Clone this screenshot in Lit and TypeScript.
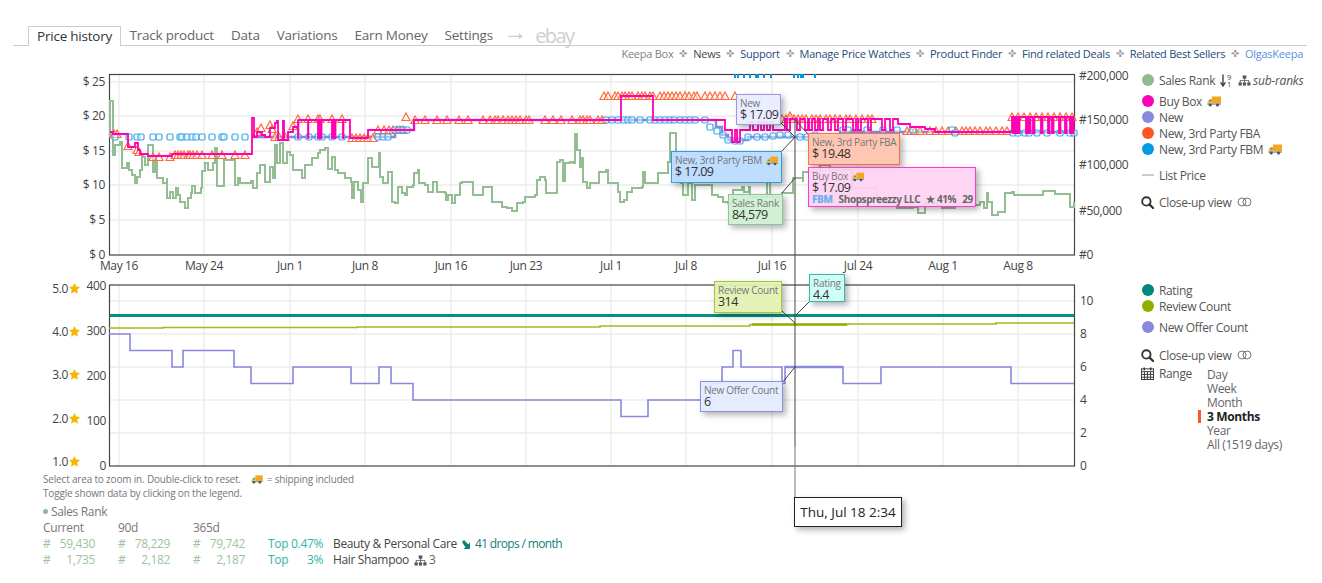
import { LitElement, css, html, svg } from 'lit';
import { customElement } from 'lit/decorators.js';

type Pt = [number, number];

const stepPath = (pts: Pt[]) =>
  pts.map(([x, y], i) => (i === 0 ? `M${x} ${y}` : `H${x} V${y}`)).join(' ');

// narrow price drops: leave the high level at x, come back width later
const pulses = (xs: number[], hi: number, lo: number, w = 1.5): Pt[] =>
  xs.flatMap((x): Pt[] => [[x, lo], [x + w, hi]]);

const row = (y: number, xs: number[]): Pt[] => xs.map((x): Pt => [x, y]);

const GRID_X = [119, 204, 290, 365, 451, 526, 611, 686, 772, 858, 943, 1018];
const DATES = ['May 16', 'May 24', 'Jun 1', 'Jun 8', 'Jun 16', 'Jun 23', 'Jul 1', 'Jul 8', 'Jul 16', 'Jul 24', 'Aug 1', 'Aug 8'];

const SALES_RANK: Pt[] = [
  [110, 138], [110, 101], [113, 101], [113, 155], [115, 145], [120, 142], [122, 168], [127, 163], [129, 170], [132, 175],
  [135, 183], [137, 177], [140, 170], [142, 157], [145, 165], [148, 145], [152, 145], [153, 172], [155, 160], [157, 178],
  [161, 178], [163, 183], [167, 178], [167, 198], [170, 192], [173, 198], [176, 188], [178, 195], [180, 202], [185, 208],
  [188, 198], [191, 193], [192, 186], [195, 193], [201, 188], [202, 171], [205, 163], [208, 170], [213, 163], [215, 148],
  [217, 186], [223, 186], [224, 160], [234, 160], [235, 185], [238, 178], [240, 183], [251, 181], [253, 188], [257, 173],
  [260, 165], [263, 165], [265, 182], [270, 167], [273, 178], [275, 145], [277, 163], [280, 143], [283, 163], [287, 152],
  [290, 155], [293, 170], [302, 178], [305, 165], [312, 158], [318, 153], [320, 150], [325, 148], [328, 169], [332, 157],
  [335, 170], [338, 173], [342, 173], [345, 178], [351, 182], [352, 198], [354, 182], [358, 190], [361, 202], [363, 183],
  [368, 158], [372, 167], [379, 153], [380, 177], [383, 183], [388, 172], [392, 202], [395, 203], [398, 187], [402, 193],
  [405, 195], [407, 187], [413, 185], [414, 173], [418, 170], [419, 183], [425, 185], [428, 192], [433, 182], [437, 192],
  [445, 193], [446, 200], [448, 195], [452, 203], [455, 195], [460, 183], [462, 182], [473, 195], [482, 195], [483, 187],
  [491, 187], [492, 202], [502, 207], [507, 208], [512, 211], [517, 203], [523, 202], [525, 197], [535, 195], [537, 180],
  [540, 177], [545, 180], [546, 193], [553, 193], [557, 162], [560, 160], [563, 181], [565, 163], [570, 162], [573, 163],
  [575, 134], [577, 150], [580, 167], [582, 158], [583, 182], [587, 188], [590, 183], [598, 183], [599, 172], [604, 172],
  [606, 170], [608, 183], [617, 183], [618, 192], [620, 202], [624, 200], [627, 192], [632, 188], [642, 187], [643, 172],
  [645, 183], [657, 183], [658, 173], [665, 173], [668, 162], [670, 133], [675, 133], [676, 180], [681, 183], [683, 195],
  [688, 183], [692, 200], [695, 185], [710, 185], [712, 195], [718, 197], [723, 202], [728, 203], [733, 190], [742, 187],
  [744, 192], [749, 187], [750, 197], [763, 197], [767, 180], [769, 180], [770, 197], [782, 193], [793, 178], [803, 182],
  [803, 172], [820, 170], [820, 165], [830, 165], [830, 170], [850, 170], [852, 188], [867, 188], [877, 188], [877, 203],
  [893, 203], [897, 208], [913, 207], [918, 213], [925, 203], [937, 205], [942, 208], [955, 203], [970, 205], [980, 202],
  [984, 208], [987, 193], [988, 202], [992, 215], [998, 212], [1005, 193], [1012, 192], [1014, 195], [1043, 195],
  [1043, 191], [1055, 191], [1055, 194], [1067, 194], [1070, 207], [1074, 202],
];

const BUY_BOX: Pt[] = [
  [110, 132], [113, 134], [127, 134], [128, 147], [135, 147], [135, 143], [138, 143], [138, 150], [140, 154], [148, 154],
  [148, 156], [172, 156], [172, 154], [252, 154], [252, 118], [254, 118], [254, 137], [257, 132], [262, 135], [265, 137],
  [270, 128], [275, 123], [277, 121], [278, 140], [283, 140], [283, 121], [284, 140], [288, 132], [293, 127], [298, 120],
  ...pulses([298, 308], 120, 138, 0.4),
  ...pulses([318, 320], 120, 138),
  ...pulses([332, 334], 120, 138),
  ...pulses([343], 120, 138, 0.4),
  [350, 120], [350, 138], [368, 138], [368, 130], [414, 130], [414, 120], [621, 120], [621, 96], [653, 96], [653, 120],
  [725, 120], [725, 130],
  ...pulses([732, 737], 130, 142, 3),
  ...pulses([750, 758, 764, 770], 130, 122, 3),
  [777, 130],
  ...pulses([782, 787, 797, 805, 809, 815, 820, 828, 835, 843, 853, 858, 868, 882, 890], 119, 130, 3),
  [898, 119], [898, 124], [910, 127], [925, 129], [935, 132], [1012, 132], [1012, 117],
  ...pulses([1013, 1015, 1018, 1026, 1029, 1033, 1041, 1048, 1052, 1059, 1065, 1070, 1072], 117, 133),
  [1074, 117],
];

const NEW_PRICE: Pt[] = [
  [252, 137], [395, 137], [395, 130], [414, 130], [414, 120], [710, 120], [716, 127], [722, 135], [728, 140], [745, 140],
  [748, 137], [800, 137], [840, 132], [1074, 133],
];

const FBM_POINTS: Pt[] = [
  ...row(137, [115, 129, 137, 141, 153, 159, 170, 180, 182, 187, 192, 196, 202, 212, 222, 224, 235, 245, 298, 309, 318, 322, 332, 342, 378, 383, 388]),
  ...row(130, [395, 399, 403, 407]),
  ...row(120, [606, 612, 618, 624, 628, 632, 640, 650, 655, 660, 665, 670, 674, 680, 685, 690, 695, 705]),
  [710, 127], [717, 131], [723, 135], [728, 140], [735, 141], [740, 141], [748, 137], [757, 137], [765, 137], [773, 136], [780, 135], [788, 135], [800, 137], [807, 137], [815, 135],
  ...row(130, [843, 848, 867, 883, 897, 913, 952]),
  ...row(133, [955, 1013, 1018, 1025, 1029, 1037, 1047, 1060, 1070, 1074]),
];

const FBA_POINTS: Pt[] = [
  ...row(134, [114, 117]),
  [128, 146], [137, 150], [139, 152],
  ...row(157, [153, 159, 170]),
  ...row(155, [175, 178, 181, 184, 188, 190, 193, 197, 202, 212, 222, 235, 245]),
  [257, 132], [261, 128], [270, 125], [272, 129],
  ...row(137, [275, 279, 285]), [293, 126],
  ...row(119, [298, 308, 318, 320, 332, 342]),
  ...row(138, [352, 356, 360, 364, 368, 373]),
  ...row(130, [378, 384, 389, 393, 397, 400, 403]), [406, 117],
  ...row(120, [415, 425, 437, 447, 459, 468, 483, 490, 495, 498, 503, 508, 512, 516, 520, 526, 529, 545, 553, 561, 572, 580, 583, 587, 590, 598, 602]),
  ...row(96, [604, 608, 615, 618, 622, 625, 629, 632, 638, 642, 645, 650, 653, 660, 664, 668, 672, 676, 680, 685, 689, 694, 697, 705, 710, 715, 720, 725, 735]),
  ...row(119, [782, 786, 790, 794, 798, 802, 806, 812, 816, 820, 826, 830, 835, 840, 846, 850, 856, 862, 868, 872]),
  [790, 116],
  ...row(131, [907, 911, 915, 920, 930, 936, 942, 948, 956, 962, 966, 970, 975, 980, 986, 990, 996, 1002, 1007]),
  ...row(117, [1012, 1018, 1024, 1030, 1036, 1042, 1048, 1054, 1060, 1066, 1072]),
];

const TOP_TICKS = [734, 737, 743, 749, 755, 757, 763, 770, 793, 797, 800, 802, 814];

const OFFER_COUNT: Pt[] = [
  [109, 334], [130, 350.5], [172, 367], [183, 350.5], [234, 367], [251, 383.5], [293, 367], [351, 383.5], [379, 367],
  [391, 383.5], [413, 400], [621, 416.5], [648, 400], [711, 383.5], [722, 367], [733, 350.5], [741, 367], [782, 383.5],
  [785, 367], [843, 383.5], [881, 367], [1011, 383.5], [1074, 383.5],
];

const REVIEW_COUNT: Pt[] = [
  [109, 328], [163, 327.5], [357, 327], [600, 326], [750, 324.5], [848, 324], [996, 323], [1074, 323],
];

const TRUCK = html`<svg class="truck" viewBox="0 0 14 11"><rect x="5" y="0.5" width="9" height="7" fill="#f6a51c"/><path d="M5 3H2.5L0.5 5.5V8.5H5z" fill="#f7c43a"/><path d="M2.8 3.8H4.6V5.4H1.8z" fill="#4a90c8"/><rect x="0.5" y="7.5" width="13.5" height="1.2" fill="#7c8a99"/><circle cx="3.2" cy="9" r="1.6" fill="#3d5a7a"/><circle cx="10.5" cy="9" r="1.6" fill="#3d5a7a"/></svg>`;

const SITEMAP = html`<svg class="icon" viewBox="0 0 14 12" fill="#555"><rect x="5" y="0.5" width="4" height="3.5"/><rect x="0.5" y="8" width="3.5" height="3.5"/><rect x="5.2" y="8" width="3.5" height="3.5"/><rect x="10" y="8" width="3.5" height="3.5"/><path d="M6.5 4h1v1.6h4.7V8h-1V6.6H7.5V8h-1V6.6H2.8V8h-1V5.6h4.7z"/></svg>`;

const SEARCH = html`<svg class="search" viewBox="0 0 14 14" fill="none" stroke="#333" stroke-width="2"><circle cx="5.8" cy="5.8" r="4.5"/><path d="M9 9l4 4" stroke-linecap="round" stroke-width="2.4"/></svg>`;

const TOGGLE = html`<svg class="toggle" viewBox="0 0 15 10" fill="none" stroke="#777"><circle cx="5" cy="5" r="4"/><circle cx="10" cy="5" r="4"/></svg>`;

const CALENDAR = html`<svg class="search" viewBox="0 0 14 14" fill="none" stroke="#333"><rect x="0.5" y="2" width="13" height="11.5"/><path d="M0.5 5h13M0.5 8h13M0.5 11h13M3.7 5v8.5M7 5v8.5M10.3 5v8.5"/><path d="M3.5 0.5v3M10.5 0.5v3" stroke-width="1.6"/></svg>`;

const SORT_ARROW = html`<svg class="sort-arrow" viewBox="0 0 6 13" fill="none" stroke="#444" stroke-width="1.4"><path d="M3 0.5v11M0.6 8.4L3 12l2.4-3.6"/></svg>`;

interface Tip {
  left: number;
  top: number;
  width: number;
  height: number;
  cls: string;
  title: string;
  value: string;
  truck?: boolean;
  seller?: boolean;
}

const TIPS: Tip[] = [
  { left: 736, top: 94, width: 45, height: 31, cls: 'new', title: 'New', value: '$ 17.09' },
  { left: 671, top: 151, width: 111, height: 32, cls: 'fbm', title: 'New, 3rd Party FBM', value: '$ 17.09', truck: true },
  { left: 808, top: 133, width: 92, height: 32, cls: 'fba', title: 'New, 3rd Party FBA', value: '$ 19.48' },
  { left: 808, top: 167, width: 168, height: 40, cls: 'buy', title: 'Buy Box', value: '$ 17.09', truck: true, seller: true },
  { left: 728, top: 194, width: 55, height: 31, cls: 'rank', title: 'Sales Rank', value: '84,579' },
  { left: 714, top: 281, width: 68, height: 32, cls: 'review', title: 'Review Count', value: '314' },
  { left: 809, top: 274, width: 36, height: 28, cls: 'rating', title: 'Rating', value: '4.4' },
  { left: 700, top: 381, width: 83, height: 31, cls: 'offer', title: 'New Offer Count', value: '6' },
];

@customElement('app-root')
export class AppRoot extends LitElement {
  static override styles = css`
    :host {
      display: block;
      position: relative;
      width: 1322px;
      height: 583px;
      overflow: hidden;
      background: #fff;
      color: #555;
      font-family: 'Open Sans', 'Noto Sans', sans-serif;
      font-size: 12px;
      letter-spacing: -0.35px;
    }

    .tabs {
      display: flex;
      align-items: flex-end;
      height: 19px;
      margin: 26px 15px 0 13px;
      padding-left: 15px;
      border-bottom: 1px solid #ccc;
      font-size: 13.5px;
      line-height: 19px;
      color: #666;
      letter-spacing: -0.22px;
    }
    .tab {
      padding: 0 8.5px;
    }
    .tab.active {
      height: 20px;
      margin-bottom: -1px;
      padding: 0 8px;
      color: #333;
      background: #fff;
      border: 1px solid #ccc;
      border-width: 1px 1px 0;
      box-sizing: border-box;
    }
    .arrow {
      align-self: flex-start;
      margin-top: -4px;
      padding: 0 8px 0 2px;
      color: #c8c8c8;
      font-size: 24px;
      line-height: 17px;
    }
    .ebay {
      color: #cfcfcf;
      font-size: 20px;
      letter-spacing: -1.6px;
    }

    .links {
      display: flex;
      justify-content: flex-end;
      align-items: center;
      gap: 6px;
      height: 14px;
      margin-bottom: 6px;
      padding-right: 19px;
      font-size: 11px;
      color: #234a7a;
      letter-spacing: -0.25px;
    }
    .links .sep {
      color: #999;
      font-size: 10px;
    }
    .links .muted {
      color: #808080;
    }
    .links .dark {
      color: #444;
    }
    .links .user {
      color: #5b8fdc;
    }

    .panel {
      display: flex;
    }
    .plot {
      display: block;
      flex: none;
      width: 1130px;
    }
    .plot text {
      fill: #444;
      font-size: 12px;
    }
    .plot .frame {
      fill: none;
      stroke: #444;
      stroke-width: 1.2;
    }
    .plot .grid {
      stroke: #ececec;
      stroke-width: 1.4;
    }
    .plot .line {
      fill: none;
    }
    .plot .mark {
      fill: rgba(255, 255, 255, 0.45);
      stroke-width: 1.2;
    }

    .legend {
      flex: 1;
      padding-left: 12px;
      line-height: 16px;
    }
    .legend-row {
      display: flex;
      align-items: center;
      gap: 5px;
      height: 16px;
      padding-top: 1px;
      box-sizing: border-box;
      white-space: nowrap;
    }
    .legend-row > .dot,
    .legend-row > .dash,
    .legend-row > svg {
      margin-top: -1px;
    }
    .dot {
      flex: none;
      width: 12px;
      height: 12px;
      border-radius: 50%;
    }
    .dash {
      flex: none;
      width: 12px;
      height: 2px;
      background: #ccc;
    }
    .truck {
      flex: none;
      width: 14px;
      height: 11px;
    }
    .icon {
      flex: none;
      width: 13px;
      height: 11px;
    }
    .search {
      flex: none;
      width: 13px;
      height: 13px;
      margin-left: -1px;
    }
    .toggle {
      flex: none;
      width: 15px;
      height: 10px;
      margin-left: 1px;
    }
    .sort {
      display: inline-flex;
      align-items: center;
      gap: 1px;
      margin-right: 2px;
      color: #444;
    }
    .sort-arrow {
      flex: none;
      width: 6px;
      height: 13px;
    }
    .sort span {
      display: block;
      font-size: 7.5px;
      line-height: 7px;
      text-align: center;
    }
    .italic {
      font-style: italic;
      margin-left: -3px;
      letter-spacing: -0.2px;
    }
    .upper {
      padding-top: 6px;
    }
    .lower {
      padding-top: 7px;
    }
    .gap-5 {
      margin-top: 5px;
    }
    .gap-10 {
      margin-top: 10px;
    }
    .gap-11 {
      margin-top: 11px;
    }
    .gap-12 {
      margin-top: 12px;
    }
    .range {
      display: flex;
      margin-top: 2px;
    }
    .range-label {
      flex: none;
      width: 65px;
    }
    .range-list {
      padding-top: 3px;
      line-height: 14px;
      color: #666;
    }
    .range-list .on {
      position: relative;
      color: #222;
      font-weight: 700;
    }
    .range-list .on::before {
      content: '';
      position: absolute;
      left: -9px;
      top: 0;
      width: 3px;
      height: 13px;
      background: #ff5722;
    }

    .foot {
      margin-top: -2px;
      padding-left: 43px;
    }
    .hint {
      display: flex;
      align-items: center;
      gap: 4px;
      height: 14px;
      font-size: 10px;
      color: #777;
      letter-spacing: -0.18px;
    }
    .hint .truck {
      width: 12px;
      height: 9px;
      margin-left: 6px;
    }
    .rank-head {
      display: flex;
      align-items: center;
      gap: 3px;
      height: 16px;
      margin-top: 3px;
      color: #777;
    }
    .rank-head i {
      width: 5px;
      height: 5px;
      border-radius: 50%;
      background: #8fbc8f;
    }
    .stats {
      display: grid;
      grid-template-columns: repeat(3, 75px) 65px auto;
      grid-auto-rows: 16px;
      margin-top: 1px;
      line-height: 16px;
      white-space: nowrap;
    }
    .stats .th {
      color: #777;
    }
    .num {
      display: flex;
      justify-content: space-between;
      width: 52px;
      color: #9cc49c;
    }
    .top {
      display: flex;
      justify-content: space-between;
      width: 55px;
      color: #2fb5a8;
    }
    .cat {
      display: flex;
      align-items: center;
      gap: 5px;
      color: #444;
    }
    .drops {
      display: inline-flex;
      align-items: center;
      gap: 4px;
      color: #0f7f78;
      letter-spacing: -0.65px;
    }
    .drops svg {
      width: 9px;
      height: 9px;
    }
    .subs {
      margin-left: -3px;
      color: #666;
    }

    .tip {
      position: absolute;
      box-sizing: border-box;
      padding: 2px 3px 0 3px;
      border: 1px solid;
      box-shadow: 3px 3px 6px rgba(0, 0, 0, 0.3);
      font-size: 12.5px;
      line-height: 10px;
      color: #333;
      letter-spacing: -0.55px;
      white-space: nowrap;
    }
    .tip .title {
      display: flex;
      align-items: center;
      gap: 4px;
      height: 13px;
      font-size: 10px;
      line-height: 13px;
      color: #777;
      letter-spacing: -0.28px;
    }
    .tip .title .truck {
      width: 12px;
      height: 10px;
    }
    .tip .seller {
      display: flex;
      gap: 6px;
      margin-top: 1px;
      font-size: 10px;
      line-height: 11px;
      font-weight: 700;
      color: #666;
      letter-spacing: -0.4px;
    }
    .tip .seller b {
      color: #6fb2ee;
    }
    .new { background: rgba(232, 236, 255, 0.92); border-color: #9a9ae4; }
    .fbm { background: rgba(187, 220, 255, 0.96); border-color: #2a9fe6; }
    .fba { background: rgba(255, 196, 176, 0.96); border-color: #ff7043; }
    .buy { background: rgba(255, 209, 243, 0.92); border-color: #ff3cc8; }
    .rank { background: rgba(204, 239, 207, 0.9); border-color: #8fc49a; }
    .review { background: rgba(227, 241, 179, 0.95); border-color: #a6c832; }
    .rating { background: rgba(204, 255, 248, 0.95); border-color: #3bb5a6; }
    .offer { background: rgba(228, 234, 255, 0.92); border-color: #8c90e0; }

    .clock {
      position: absolute;
      left: 794px;
      top: 497px;
      width: 108px;
      height: 30px;
      box-sizing: border-box;
      border: 1px solid #222;
      background: #fff;
      box-shadow: 3px 3px 6px rgba(0, 0, 0, 0.3);
      font-size: 13.5px;
      line-height: 28px;
      letter-spacing: 0;
      text-align: center;
      color: #222;
    }
    .cross {
      position: absolute;
      inset: 0;
      width: 1322px;
      height: 583px;
      pointer-events: none;
    }
  `;

  private plotFrame(top: number, bottom: number, hLines: number[]) {
    return svg`
      ${hLines.map((y) => svg`<line class="grid" x1="109" x2="1074" y1=${y} y2=${y}></line>`)}
      ${GRID_X.map((x) => svg`<line class="grid" x1=${x} x2=${x} y1=${top} y2=${bottom}></line>`)}
      <rect class="frame" x="109.5" y=${top} width="965" height=${bottom - top}></rect>
    `;
  }

  private renderPriceChart() {
    const prices = [
      ['$ 25', 82], ['$ 20', 116], ['$ 15', 151], ['$ 10', 185], ['$ 5', 220], ['$ 0', 255],
    ] as const;
    const ranks = [
      ['#200,000', 76], ['#150,000', 120], ['#100,000', 165], ['#50,000', 211], ['#0', 255],
    ] as const;
    return html`
      <svg class="plot" viewBox="0 66 1130 209" height="209">
        ${this.plotFrame(74.5, 255, [82, 116, 151, 185, 220])}
        ${prices.map(([t, y]) => svg`<text x="105" y=${y + 4} text-anchor="end">${t}</text>`)}
        ${ranks.map(([t, y]) => svg`<text x="1079" y=${y + 4}>${t}</text>`)}
        ${DATES.map((t, i) => svg`<text x=${GRID_X[i]} y="270" text-anchor="middle">${t}</text>`)}
        <path class="line" d=${stepPath(SALES_RANK)} stroke="#93bd93" stroke-width="2"></path>
        <path class="line" d=${stepPath(NEW_PRICE)} stroke="#8888dd" stroke-width="2.5"></path>
        ${FBA_POINTS.map(
          ([x, y]) => svg`<path class="mark" d="M${x - 4} ${y + 3.5}h8l-4-7.5z" stroke="#ff6a3a"></path>`,
        )}
        ${FBM_POINTS.map(
          ([x, y]) =>
            svg`<rect class="mark" x=${x - 3} y=${y - 3} width="6" height="6" rx="1.5" stroke="#3aa6e8"></rect>`,
        )}
        ${TOP_TICKS.map((x) => svg`<rect x=${x} y="74" width="2" height="4" fill="#0099e6"></rect>`)}
        <path class="line" d=${stepPath(BUY_BOX)} stroke="#ff00b4" stroke-width="1.8"></path>
      </svg>
    `;
  }

  private renderCountChart() {
    const counts = [['400', 286], ['300', 331], ['200', 376], ['100', 421], ['0', 466]] as const;
    const stars = [['5.0', 289], ['4.0', 332], ['3.0', 375], ['2.0', 419], ['1.0', 462]] as const;
    const offers = [['10', 301], ['8', 334], ['6', 367], ['4', 400], ['2', 433], ['0', 466]] as const;
    return html`
      <svg class="plot" viewBox="0 275 1130 199" height="199">
        ${this.plotFrame(285, 466, [301, 334, 367, 400, 433])}
        ${counts.map(([t, y]) => svg`<text x="106" y=${y + 4} text-anchor="end">${t}</text>`)}
        ${stars.map(
          ([t, y]) => svg`
            <text x="68" y=${y + 4} text-anchor="end">${t}</text>
            <path transform="translate(69 ${y - 6})" fill="#f5b800"
              d="M5.5 0l1.7 3.6 3.8.5-2.8 2.7.7 3.9-3.4-1.9-3.4 1.9.7-3.9L0 4.1l3.8-.5z"></path>
          `,
        )}
        ${offers.map(([t, y]) => svg`<text x="1080" y=${y + 4}>${t}</text>`)}
        <path class="line" d=${stepPath(OFFER_COUNT)} stroke="#8888dd" stroke-width="1.6"></path>
        <path class="line" d=${stepPath(REVIEW_COUNT)} stroke="#9dbd1e" stroke-width="1.6"></path>
        <line x1="752" x2="847" y1="324.5" y2="324.5" stroke="#8eb100" stroke-width="2.5"></line>
        <line x1="785" x2="843" y1="367" y2="367" stroke="#8888dd" stroke-width="2.4"></line>
        <line x1="110" x2="1074" y1="315.5" y2="315.5" stroke="#00937f" stroke-width="3"></line>
      </svg>
    `;
  }

  private renderTip(t: Tip) {
    return html`
      <div
        class="tip ${t.cls}"
        style="left:${t.left}px;top:${t.top}px;width:${t.width}px;height:${t.height}px"
      >
        <div class="title">${t.title}${t.truck ? TRUCK : ''}</div>
        <div>${t.value}</div>
        ${t.seller
          ? html`<div class="seller"><b>FBM</b><span>Shopspreezzy LLC</span><span>★ 41%</span><span>29</span></div>`
          : ''}
      </div>
    `;
  }

  override render() {
    return html`
      <nav class="tabs">
        <span class="tab active">Price history</span>
        <span class="tab">Track product</span>
        <span class="tab">Data</span>
        <span class="tab">Variations</span>
        <span class="tab">Earn Money</span>
        <span class="tab">Settings</span>
        <span class="arrow">→</span>
        <span class="ebay">ebay</span>
      </nav>
      <div class="links">
        <span class="muted">Keepa Box</span><span class="sep">✜</span>
        <span class="dark">News</span><span class="sep">✜</span>
        <span>Support</span><span class="sep">✜</span>
        <span>Manage Price Watches</span><span class="sep">✜</span>
        <span>Product Finder</span><span class="sep">✜</span>
        <span>Find related Deals</span><span class="sep">✜</span>
        <span>Related Best Sellers</span><span class="sep">✜</span>
        <span class="user">OlgasKeepa</span>
      </div>

      <section class="panel">
        ${this.renderPriceChart()}
        <div class="legend upper">
          <div class="legend-row">
            <i class="dot" style="background:#8fbc8f"></i>Sales Rank
            <span class="sort">${SORT_ARROW}<span>9<br />1</span></span>
            ${SITEMAP}<span class="italic">sub-ranks</span>
          </div>
          <div class="legend-row gap-5"><i class="dot" style="background:#ff00b4"></i>Buy Box ${TRUCK}</div>
          <div class="legend-row"><i class="dot" style="background:#8888dd"></i>New</div>
          <div class="legend-row"><i class="dot" style="background:#ff5722"></i>New, 3rd Party FBA</div>
          <div class="legend-row"><i class="dot" style="background:#039be5"></i>New, 3rd Party FBM ${TRUCK}</div>
          <div class="legend-row gap-10"><i class="dash"></i>List Price</div>
          <div class="legend-row gap-11">${SEARCH}Close-up view ${TOGGLE}</div>
        </div>
      </section>

      <section class="panel">
        ${this.renderCountChart()}
        <div class="legend lower">
          <div class="legend-row"><i class="dot" style="background:#00897b"></i>Rating</div>
          <div class="legend-row"><i class="dot" style="background:#8eb100"></i>Review Count</div>
          <div class="legend-row gap-5"><i class="dot" style="background:#8888dd"></i>New Offer Count</div>
          <div class="legend-row gap-12">${SEARCH}Close-up view ${TOGGLE}</div>
          <div class="range">
            <div class="legend-row range-label">${CALENDAR}Range</div>
            <div class="range-list">
              <div>Day</div>
              <div>Week</div>
              <div>Month</div>
              <div class="on">3 Months</div>
              <div>Year</div>
              <div>All (1519 days)</div>
            </div>
          </div>
        </div>
      </section>

      <footer class="foot">
        <div class="hint">Select area to zoom in. Double-click to reset. ${TRUCK} = shipping included</div>
        <div class="hint">Toggle shown data by clicking on the legend.</div>
        <div class="rank-head"><i></i>Sales Rank</div>
        <div class="stats">
          <span class="th">Current</span><span class="th">90d</span><span class="th">365d</span><span></span><span></span>
          <span class="num"><span>#</span><span>59,430</span></span>
          <span class="num"><span>#</span><span>78,229</span></span>
          <span class="num"><span>#</span><span>79,742</span></span>
          <span class="top"><span>Top</span><span>0.47%</span></span>
          <span class="cat">Beauty &amp; Personal Care
            <span class="drops">
              <svg viewBox="0 0 9 9"><path d="M0 2l2-2 4.2 4.2L8 2.6V9H1.6l1.8-1.8z" fill="#0f7f78"></path></svg>
              41 drops / month
            </span>
          </span>
          <span class="num"><span>#</span><span>1,735</span></span>
          <span class="num"><span>#</span><span>2,182</span></span>
          <span class="num"><span>#</span><span>2,187</span></span>
          <span class="top"><span>Top</span><span>3%</span></span>
          <span class="cat">Hair Shampoo ${SITEMAP}<span class="subs">3</span></span>
        </div>
      </footer>

      <svg class="cross">
        <line x1="795" x2="795" y1="120" y2="447" stroke="#444" stroke-width="1"></line>
        <line x1="795" x2="795" y1="447" y2="497" stroke="#777" stroke-width="1"></line>
        <g stroke="#444" stroke-width="1">
          <line x1="781" y1="123" x2="795" y2="137"></line>
          <line x1="782" y1="151" x2="795" y2="137"></line>
          <line x1="795" y1="120" x2="809" y2="135"></line>
          <line x1="782" y1="193" x2="795" y2="178"></line>
          <line x1="782" y1="311" x2="795" y2="323"></line>
          <line x1="809" y1="302" x2="795" y2="316"></line>
          <line x1="782" y1="383" x2="795" y2="367"></line>
        </g>
      </svg>
      ${TIPS.map((t) => this.renderTip(t))}
      <div class="clock">Thu, Jul 18 2:34</div>
    `;
  }
}
